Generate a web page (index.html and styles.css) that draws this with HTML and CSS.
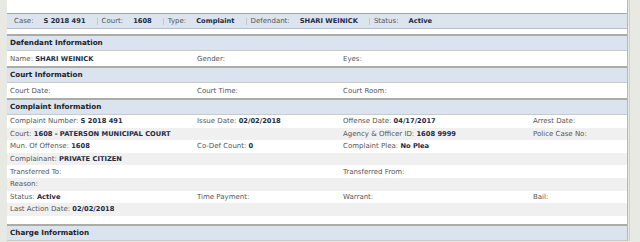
FILE: index.html
```html
<!DOCTYPE html>
<html lang="en">
<head>
    <meta charset="UTF-8">
    <title>Case Detail</title>
    <link rel="stylesheet" href="styles.css">
</head>
<body>
    <div class="frame">
        <div class="panel">
            <div class="top-gap"></div>

            <div class="case-bar">
                <span class="case-item"><span class="lbl">Case:</span><b>S 2018 491</b></span>
                <span class="case-item"><span class="lbl">Court:</span><b>1608</b></span>
                <span class="case-item"><span class="lbl">Type:</span><b>Complaint</b></span>
                <span class="case-item"><span class="lbl">Defendant:</span><b>SHARI WEINICK</b></span>
                <span class="case-item"><span class="lbl">Status:</span><b>Active</b></span>
            </div>
            <div class="bar-gap"></div>

            <div class="sec-head">Defendant Information</div>
            <div class="row tall">
                <div>Name: <b>SHARI WEINICK</b></div>
                <div>Gender:</div>
                <div>Eyes:</div>
            </div>

            <div class="sec-head">Court Information</div>
            <div class="row tall">
                <div>Court Date:</div>
                <div>Court Time:</div>
                <div>Court Room:</div>
            </div>

            <div class="sec-head">Complaint Information</div>
            <div class="row">
                <div>Complaint Number: <b>S 2018 491</b></div>
                <div>Issue Date: <b>02/02/2018</b></div>
                <div>Offense Date: <b>04/17/2017</b></div>
                <div>Arrest Date:</div>
            </div>
            <div class="row alt">
                <div class="span2">Court: <b>1608 - PATERSON MUNICIPAL COURT</b></div>
                <div>Agency &amp; Officer ID: <b>1608 9999</b></div>
                <div>Police Case No:</div>
            </div>
            <div class="row">
                <div>Mun. Of Offense: <b>1608</b></div>
                <div>Co-Def Count: <b>0</b></div>
                <div>Complaint Plea: <b>No Plea</b></div>
            </div>
            <div class="row alt">
                <div>Complainant: <b>PRIVATE CITIZEN</b></div>
            </div>
            <div class="row">
                <div class="span2">Transferred To:</div>
                <div>Transferred From:</div>
            </div>
            <div class="row alt">
                <div>Reason:</div>
            </div>
            <div class="row">
                <div>Status: <b>Active</b></div>
                <div>Time Payment:</div>
                <div>Warrant:</div>
                <div>Bail:</div>
            </div>
            <div class="row alt">
                <div>Last Action Date: <b>02/02/2018</b></div>
            </div>
            <div class="row-empty"></div>

            <div class="sec-head">Charge Information</div>
        </div>
    </div>
</body>
</html>
```

FILE: styles.css
```css
body {
    margin: 0;
    background-color: #e9e9e3;
    font-family: "DejaVu Sans", Verdana, sans-serif;
    font-size: 7px;
    color: #555;
}
.frame {
    margin-left: 7px;
    width: 622px;
    border-right: 1px solid #d0d0ca;
}
.panel {
    width: 620px;
    background-color: white;
    border-right: 1px solid #b9b9b4;
}
.top-gap {
    height: 13px;
}
.case-bar {
    display: flex;
    align-items: center;
    height: 14px;
    padding-left: 7px;
    background-color: #dce4ee;
    border-top: 1px solid #a6a6a0;
    border-bottom: 1px solid #b4bcd8;
}
.case-item {
    line-height: 7px;
}
.case-item + .case-item {
    margin-left: 11px;
    padding-left: 4px;
    border-left: 1px solid #c4c8d0;
}
.case-item .lbl {
    margin-right: 10px;
}
b {
    font-size: 6.7px;
    color: #1d2a44;
}
.bar-gap {
    height: 5px;
}
.sec-head {
    height: 14px;
    line-height: 14px;
    padding-left: 3px;
    background-color: #dbe4ee;
    border-top: 2px solid #abaca6;
    border-bottom: 1px solid #c6cac8;
    font-size: 7.2px;
    font-weight: bold;
    color: #222;
}
.row {
    display: grid;
    grid-template-columns: 187px 146px 190px 1fr;
    align-items: center;
    height: 12.6px;
    padding-left: 3px;
    white-space: nowrap;
}
.row.tall {
    height: 15px;
}
.row.alt {
    background-color: #f0f0f0;
}
.span2 {
    grid-column: span 2;
}
.row-empty {
    height: 8px;
}
```
